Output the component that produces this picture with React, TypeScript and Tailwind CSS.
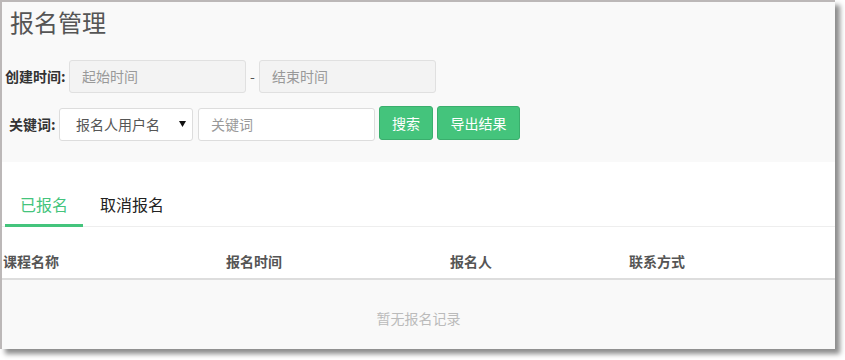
import React from 'react';

const font = { fontFamily: '"Microsoft YaHei", "Noto Sans CJK SC", sans-serif' };

export default function App() {
  return (
    <div className="w-[845px] h-[360px] bg-white overflow-hidden" style={font}>
      <div className="w-[835px] h-[349px] border-t-2 border-l-2 border-[#bcb8b8] bg-[#f9f9f9] shadow-[5px_5px_5px_rgba(0,0,0,0.45)] flex flex-col">
        {/* header / filters */}
        <div className="h-[160px] bg-[#f9f9f9]">
          <h1 className="pl-[8px] pt-[3px] text-[24px] leading-[34px] text-[#555]">报名管理</h1>
          <div className="mt-[21px] flex items-center h-[33px]">
            <span className="pl-[3px] w-[67px] text-[14px] font-bold text-[#333]">创建时间:</span>
            <div className="w-[177px] h-[33px] rounded-[3px] border border-[#e0e0e0] bg-[#f3f3f3] pl-[12px] flex items-center text-[14px] text-[#999]">起始时间</div>
            <span className="w-[13px] text-center text-[14px] text-[#555]">-</span>
            <div className="w-[177px] h-[33px] rounded-[3px] border border-[#e0e0e0] bg-[#f3f3f3] pl-[12px] flex items-center text-[14px] text-[#999]">结束时间</div>
          </div>
          <div className="mt-[13px] flex items-start h-[36px]">
            <span className="mt-[2px] h-[33px] flex items-center pl-[7px] w-[57px] text-[14px] font-bold text-[#333]">关键词:</span>
            <div className="mt-[2px] w-[134px] h-[33px] rounded-[3px] border border-[#ddd] bg-white pl-[16px] pr-[6px] flex items-center justify-between text-[14px] text-[#555]">
              <span>报名人用户名</span>
              <svg width="7" height="6" viewBox="0 0 7 6" className="mb-[2px]">
                <path d="M0 0 H7 L3.5 6 Z" fill="#111" />
              </svg>
            </div>
            <div className="mt-[2px] ml-[5px] w-[177px] h-[33px] rounded-[3px] border border-[#ddd] bg-white pl-[12px] flex items-center text-[14px] text-[#999]">关键词</div>
            <button className="ml-[4px] w-[54px] h-[34px] rounded-[3px] border border-[#3aae6d] bg-[#44c47c] text-white text-[14px]">搜索</button>
            <button className="ml-[4px] w-[83px] h-[34px] rounded-[3px] border border-[#3aae6d] bg-[#44c47c] text-white text-[14px]">导出结果</button>
          </div>
        </div>

        {/* tabs + table */}
        <div className="flex-1 bg-white flex flex-col">
          <div className="flex h-[65px] items-end border-b border-[#eee] pl-[3px]">
            <div className="w-[78px] h-[44px] flex justify-center pt-[9px] border-b-[3px] border-[#44c47c] text-[16px] leading-[24px] text-[#44c47c] mb-[-1px]">已报名</div>
            <div className="w-[98px] h-[44px] flex justify-center pt-[9px] text-[16px] leading-[24px] text-[#222] mb-[-1px]">取消报名</div>
          </div>
          <div className="mt-[18px] h-[35px] grid grid-cols-[223px_224px_179px_1fr] items-center border-b-2 border-[#ddd] pl-[1px] text-[14px] font-bold text-[#555]">
            <span>课程名称</span>
            <span>报名时间</span>
            <span>报名人</span>
            <span>联系方式</span>
          </div>
          <div className="flex-1 bg-[#f9f9f9] flex items-center justify-center text-[14px] text-[#bbb] pt-[8px]">暂无报名记录</div>
        </div>
      </div>
    </div>
  );
}
